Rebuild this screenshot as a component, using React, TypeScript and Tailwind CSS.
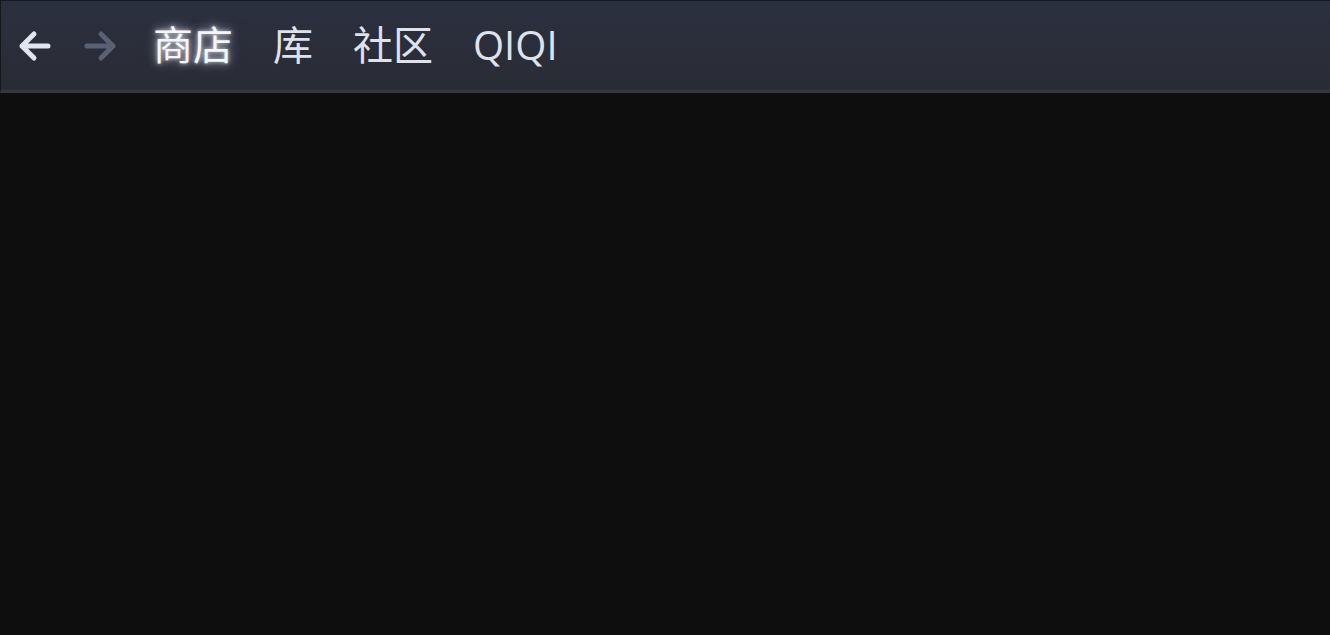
import React from "react";

const Arrow = ({ dir, color }: { dir: "left" | "right"; color: string }) => (
  <svg width="34" height="34" viewBox="0 0 34 34" fill="none" className="shrink-0">
    {dir === "left" ? (
      <path d="M4 17H30M4 17L16 5M4 17L16 29" stroke={color} strokeWidth="5" strokeLinecap="round" strokeLinejoin="round" />
    ) : (
      <path d="M30 17H4M30 17L18 5M30 17L18 29" stroke={color} strokeWidth="5" strokeLinecap="round" strokeLinejoin="round" />
    )}
  </svg>
);

const tabs = [
  { label: "商店", active: true },
  { label: "库", active: false },
  { label: "社区", active: false },
  { label: "QIQI", active: false },
];

export default function App() {
  return (
    <div
      className="w-[1330px] h-[635px] bg-[#0e0e0f] flex flex-col overflow-hidden"
      style={{ fontFamily: '"Open Sans", "Noto Sans CJK SC", sans-serif' }}
    >
      <header className="h-[93px] shrink-0 flex items-center pl-[17px] bg-gradient-to-b from-[#2b3040] to-[#2a2c34] border-t border-l border-[#16171b] border-b-[3px] border-b-[#36383f]">
        <div className="flex items-center gap-[31px]">
          <Arrow dir="left" color="#e1e5ef" />
          <Arrow dir="right" color="#596172" />
        </div>
        <nav className="flex items-center gap-[40px] ml-[36px] text-[40px] leading-none text-[#dfe2ec] pb-[2px]">
          {tabs.map((t) => (
            <span
              key={t.label}
              className={t.active ? "text-[#f4f6fb] [text-shadow:0_0_4px_rgba(255,255,255,0.7),0_0_10px_rgba(225,232,255,0.55),0_0_16px_rgba(200,210,240,0.35)]" : ""}
            >
              {t.label}
            </span>
          ))}
        </nav>
      </header>
      <main className="flex-1" />
    </div>
  );
}
